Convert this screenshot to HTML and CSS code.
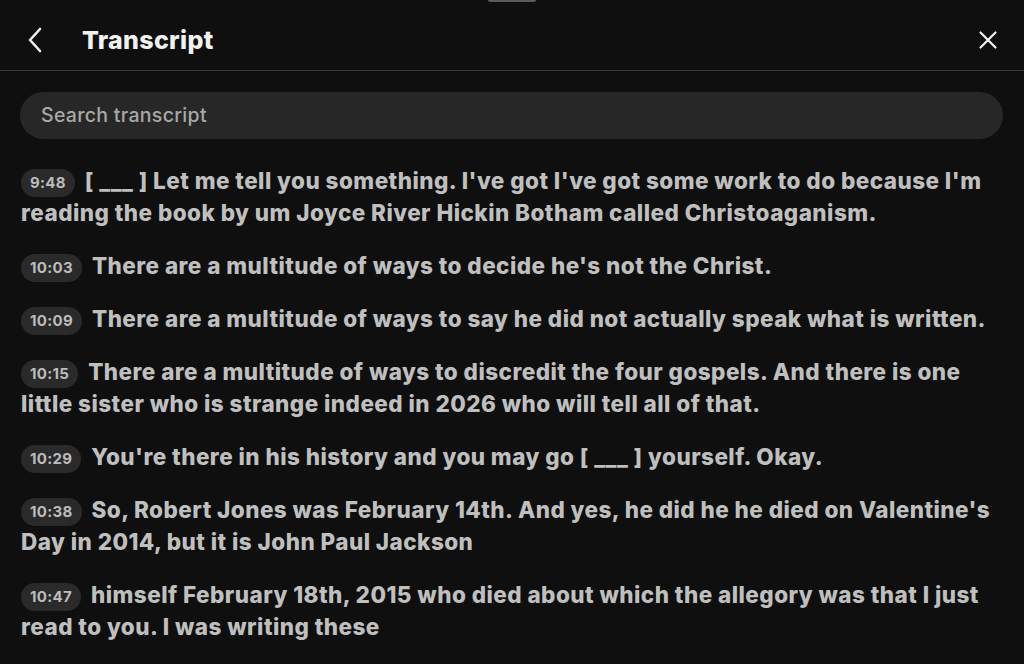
FILE: index.html
```html
<!DOCTYPE html>
<html>
<head>
<meta charset="utf-8">
<link rel="stylesheet" href="styles.css">
</head>
<body>
<div class="handle"></div>
<header class="top">
  <button class="icon back" aria-label="Back">
    <svg width="18" height="26" viewBox="0 0 18 26"><path d="M14 2 L4 13 L14 24" fill="none" stroke="#f2f2f2" stroke-width="2.6" stroke-linecap="round" stroke-linejoin="round"/></svg>
  </button>
  <h1 class="title">Transcript</h1>
  <button class="icon close" aria-label="Close">
    <svg width="20" height="20" viewBox="0 0 20 20"><path d="M2.5 2.5 L17.5 17.5 M17.5 2.5 L2.5 17.5" fill="none" stroke="#f2f2f2" stroke-width="2.2" stroke-linecap="round"/></svg>
  </button>
</header>
<main class="content">
  <div class="search">Search transcript</div>
  <div class="list">
    <p class="seg"><span class="ts">9:48</span>[ ___ ] Let me tell you something. I've got I've got some work to do because I'm reading the book by um Joyce River Hickin Botham called Christoaganism.</p>
    <p class="seg"><span class="ts">10:03</span>There are a multitude of ways to decide he's not the Christ.</p>
    <p class="seg"><span class="ts">10:09</span>There are a multitude of ways to say he did not actually speak what is written.</p>
    <p class="seg"><span class="ts">10:15</span>There are a multitude of ways to discredit the four gospels. And there is one little sister who is strange indeed in 2026 who will tell all of that.</p>
    <p class="seg"><span class="ts">10:29</span>You're there in his history and you may go [ ___ ] yourself. Okay.</p>
    <p class="seg"><span class="ts">10:38</span>So, Robert Jones was February 14th. And yes, he did he he died on Valentine's Day in 2014, but it is John Paul Jackson</p>
    <p class="seg"><span class="ts">10:47</span>himself February 18th, 2015 who died about which the allegory was that I just read to you. I was writing these</p>
  </div>
</main>
</body>
</html>
```
FILE: styles.css
```css
* { box-sizing: border-box; }
html, body { margin: 0; padding: 0; }
body {
  background: #0f0f0f;
  width: 1024px;
  height: 664px;
  overflow: hidden;
  font-family: Inter, "Noto Sans", sans-serif;
  color: #c2c2c2;
  position: relative;
}
.handle {
  position: absolute;
  left: 488px;
  top: 0;
  width: 48px;
  height: 2px;
  background: #5a5a5a;
  border-radius: 0 0 2px 2px;
}
.top {
  height: 71px;
  display: flex;
  align-items: center;
  padding: 9px 26px 0 24px;
  border-bottom: 1px solid #3a3a3a;
}
.icon {
  background: none;
  border: 0;
  padding: 0;
  display: flex;
  align-items: center;
  justify-content: center;
}
.back { width: 22px; height: 30px; }
.title {
  margin: 0 0 0 36px;
  font-size: 25px;
  font-weight: 800;
  color: #f2f2f2;
  letter-spacing: 0.3px;
  flex: 1;
}
.close { width: 20px; height: 20px; }
.content { padding: 21px 21px 0 20px; }
.search {
  height: 47px;
  border-radius: 24px;
  background: #272727;
  color: #a8a8a8;
  font-size: 19.5px;
  font-weight: 500;
  letter-spacing: 0.3px;
  padding-left: 21px;
  display: flex;
  align-items: center;
  padding-bottom: 1px;
}
.list { padding: 26px 0 0 1px; }
.seg {
  margin: 0 0 21px 0;
  font-size: 22.5px;
  font-weight: 800;
  line-height: 32px;
  color: #bfbfbf;
  letter-spacing: 0.45px;
}
.ts {
  display: inline-block;
  background: #2a2a2a;
  color: #bcbcbc;
  font-size: 15px;
  font-weight: 700;
  letter-spacing: 0.3px;
  line-height: 28px;
  height: 28px;
  padding: 0 9px;
  border-radius: 14px;
  margin-right: 10px;
  vertical-align: 1px;
}
```
